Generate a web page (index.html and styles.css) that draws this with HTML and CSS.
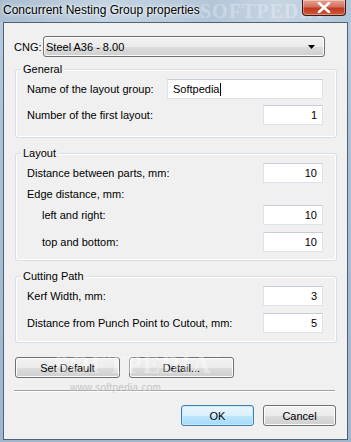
FILE: index.html
```html
<!DOCTYPE html>
<html>
<head>
<meta charset="utf-8">
<link rel="stylesheet" href="styles.css">
</head>
<body>
<div class="window">
  <div class="titlebar">
    <span class="title">Concurrent Nesting Group properties</span>
    <span class="ghost ghost-title">SOFTPEDIA</span>
    <div class="close">
      <svg width="14" height="11" viewBox="0 0 14 11"><path d="M2 1 L12 10 M12 1 L2 10" stroke="#fff" stroke-width="2.6" stroke-linecap="round"/></svg>
    </div>
  </div>
  <div class="client">
    <div class="cng-row">
      <span class="cng-label">CNG:</span>
      <div class="combo">
        <span>Steel A36 - 8.00</span>
        <svg class="arrow" width="7" height="4" viewBox="0 0 7 4"><path d="M0 0 H7 L3.5 4 Z" fill="#000"/></svg>
      </div>
    </div>

    <fieldset class="group general">
      <legend>General</legend>
      <div class="row"><span class="lbl">Name of the layout group:</span><div class="input wide">Softpedia<span class="caret"></span></div></div>
      <div class="row"><span class="lbl">Number of the first layout:</span><div class="input num">1</div></div>
    </fieldset>

    <fieldset class="group layout">
      <legend>Layout</legend>
      <div class="row"><span class="lbl">Distance between parts, mm:</span><div class="input num">10</div></div>
      <div class="row sub-head"><span class="lbl">Edge distance, mm:</span></div>
      <div class="row"><span class="lbl indent">left and right:</span><div class="input num">10</div></div>
      <div class="row"><span class="lbl indent">top and bottom:</span><div class="input num">10</div></div>
    </fieldset>

    <fieldset class="group cutting">
      <legend>Cutting Path</legend>
      <div class="row"><span class="lbl">Kerf Width, mm:</span><div class="input num">3</div></div>
      <div class="row"><span class="lbl">Distance from Punch Point to Cutout, mm:</span><div class="input num">5</div></div>
    </fieldset>

    <div class="btn-row">
      <button class="btn w105">Set Default</button>
      <button class="btn w105">Detail...</button>
    </div>
    <div class="sep"></div>
    <div class="btn-row right">
      <button class="btn default w72">OK</button>
      <button class="btn w72">Cancel</button>
    </div>
    <span class="ghost ghost-client">SOFTPEDIA<sup>™</sup></span>
    <div class="watermark">www.softpedia.com</div>
  </div>
</div>
</body>
</html>
```
FILE: styles.css
```css
html, body {
  margin: 0;
  padding: 0;
}
body {
  width: 351px;
  height: 442px;
  overflow: hidden;
  font-family: "Liberation Sans", Arial, sans-serif;
  font-size: 11px;
  color: #000;
}
.window {
  width: 351px;
  height: 442px;
  background: linear-gradient(180deg, #b7cadc 0%, #a9bfd5 40%, #9fb6cc 100%);
  display: flex;
  flex-direction: column;
}
.titlebar {
  height: 22px;
  flex: none;
  position: relative;
  display: flex;
  align-items: flex-start;
  background: linear-gradient(90deg, #a9bdd1 0%, #c3d3e2 30%, #b3c6d8 60%, #c7d5e3 80%, #b0c4d7 100%);
}
.title {
  margin: 2px 0 0 3px;
  font-size: 12px;
  line-height: 16px;
  color: #000;
  text-shadow: 0 0 6px #fff, 0 0 3px #fff;
  position: relative;
  z-index: 1;
}
.close {
  position: absolute;
  left: 302px;
  top: 0;
  width: 42px;
  height: 15px;
  border: 1px solid #3b1a1a;
  border-top: none;
  border-radius: 0 0 4px 4px;
  background: linear-gradient(180deg, #e8a493 0%, #d4705c 45%, #c1391f 55%, #cc5a3a 100%);
  box-shadow: inset 0 0 0 1px rgba(255,255,255,0.35);
  display: flex;
  align-items: center;
  justify-content: center;
}
.ghost {
  position: absolute;
  font-family: "Liberation Serif", serif;
  font-weight: bold;
  color: rgba(255, 255, 255, 0.3);
  letter-spacing: 1px;
  white-space: nowrap;
  pointer-events: none;
}
.ghost-title {
  left: 200px;
  top: 1px;
  font-size: 20px;
  line-height: 20px;
}
.ghost-client {
  left: 50px;
  top: 329px;
  font-size: 26px;
  line-height: 26px;
  color: rgba(255, 255, 255, 0.4);
  z-index: 2;
}
.ghost-client sup {
  font-size: 8px;
  vertical-align: top;
  line-height: 10px;
}
.client {
  flex: 1;
  margin: 0 3px 2px 3px;
  border: 1px solid #4d6178;
  background: #f0f0f0;
  padding: 0 10px 0 11px;
  position: relative;
}
.cng-row {
  display: flex;
  align-items: center;
  height: 21px;
  margin-top: 13px;
  margin-left: -1px;
}
.cng-label {
  width: 29px;
}
.combo {
  height: 19px;
  border: 1px solid #707070;
  border-radius: 3px;
  background: linear-gradient(180deg, #f2f2f2 0%, #ebebeb 50%, #dddddd 51%, #cfcfcf 100%);
  box-shadow: inset 0 0 0 1px #fcfcfc;
  display: flex;
  align-items: center;
  justify-content: space-between;
  padding: 0 9px 0 2px;
  box-sizing: content-box;
  width: 269px;
}
.group {
  margin: 0;
  padding: 3px 13px 0 11px;
  border: 1px solid #d5dfe5;
  border-radius: 3px;
  box-shadow: inset 0 0 0 1px #fff;
  min-width: 0;
  display: flex;
  flex-direction: column;
  gap: 7px;
}
.group legend {
  padding: 0 2px;
  margin-left: -6px;
  line-height: 14px;
  background: #f0f0f0;
}
.general {
  margin-top: 5px;
  gap: 6px;
  padding-bottom: 12px;
}
.layout {
  margin-top: 8px;
  padding-bottom: 8px;
}
.cutting {
  margin-top: 8px;
  padding-bottom: 9px;
}
.row {
  display: flex;
  align-items: center;
  justify-content: space-between;
  height: 20px;
}
.row.sub-head {
  height: 14px;
  margin: -3px 0 -3px;
}
.lbl.indent {
  padding-left: 15px;
}
.input {
  height: 18px;
  border: 1px solid #dde3ea;
  border-top-color: #c5cdd6;
  background: #fff;
  display: flex;
  align-items: center;
  line-height: 14px;
}
.input.wide {
  width: 149px;
  padding-left: 5px;
}
.input.num {
  width: 53px;
  justify-content: flex-end;
  padding-right: 5px;
}
.caret {
  display: inline-block;
  width: 1px;
  height: 13px;
  background: #000;
  margin-left: 1px;
}
.btn-row {
  display: flex;
  gap: 9px;
  margin-top: 14px;
}
.btn-row.right {
  justify-content: flex-end;
  margin-top: 13px;
  margin-right: 1px;
}
.btn {
  height: 21px;
  margin: 0;
  padding: 0;
  font-family: inherit;
  font-size: 11px;
  color: #000;
  border: 1px solid #707070;
  border-radius: 3px;
  background: linear-gradient(180deg, #f2f2f2 0%, #ebebeb 50%, #dddddd 51%, #cfcfcf 100%);
  box-shadow: inset 0 0 0 1px #fcfcfc;
}
.btn.default {
  border-color: #3c7fb1;
  background: linear-gradient(180deg, #eaf6fd 0%, #d9f0fc 50%, #bee6fd 51%, #a7d9f5 100%);
  box-shadow: inset 0 0 0 1px #c5eafd;
}
.w105 { width: 105px; }
.w72 { width: 73px; }
.sep {
  margin: 12px 2px 0 -1px;
  height: 1px;
  background: #a0a0a0;
  border-bottom: 1px solid #fff;
}
.watermark {
  position: absolute;
  left: 66px;
  top: 359px;
  font-size: 10px;
  line-height: 12px;
  color: #c4c4c4;
  letter-spacing: 0.3px;
}
```
